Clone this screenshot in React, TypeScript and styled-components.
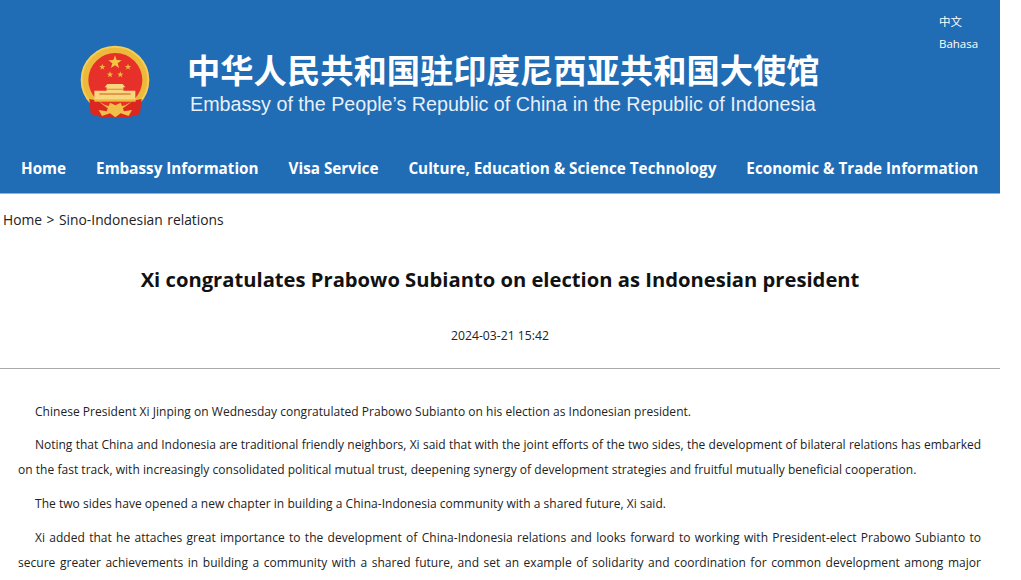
import styled, { createGlobalStyle, css } from "styled-components";

const FONT = `"Open Sans", "Noto Sans CJK SC", sans-serif`;

const navItems = [
  "Home",
  "Embassy Information",
  "Visa Service",
  "Culture, Education & Science Technology",
  "Economic & Trade Information",
];

const paragraphs = [
  { text: "Chinese President Xi Jinping on Wednesday congratulated Prabowo Subianto on his election as Indonesian president." },
  {
    text: "Noting that China and Indonesia are traditional friendly neighbors, Xi said that with the joint efforts of the two sides, the development of bilateral relations has embarked on the fast track, with increasingly consolidated political mutual trust, deepening synergy of development strategies and fruitful mutually beneficial cooperation.",
    tight: true,
  },
  { text: "The two sides have opened a new chapter in building a China-Indonesia community with a shared future, Xi said." },
  { text: "Xi added that he attaches great importance to the development of China-Indonesia relations and looks forward to working with President-elect Prabowo Subianto to secure greater achievements in building a community with a shared future, and set an example of solidarity and coordination for common development among major developing countries." },
];

const starPoints = (cx: number, cy: number, r: number) => {
  const pts: string[] = [];
  for (let i = 0; i < 10; i++) {
    const rad = i % 2 === 0 ? r : r * 0.4;
    const a = (Math.PI / 5) * i - Math.PI / 2;
    pts.push(`${(cx + rad * Math.cos(a)).toFixed(1)},${(cy + rad * Math.sin(a)).toFixed(1)}`);
  }
  return pts.join(" ");
};

function Emblem() {
  return (
    <svg width="70" height="76" viewBox="60 45 210 228">
      <circle cx="165" cy="150" r="100" fill="#edb93a" stroke="#f5cd58" strokeWidth="6" />
      <circle cx="166" cy="150" r="81" fill="#e8302a" />
      <polygon points={starPoints(165, 97, 21)} fill="#f3c544" />
      <polygon points={starPoints(127, 111, 10)} fill="#eeb83c" />
      <polygon points={starPoints(204, 111, 10)} fill="#eeb83c" />
      <polygon points={starPoints(150, 134, 10)} fill="#eeb83c" />
      <polygon points={starPoints(181, 134, 10)} fill="#eeb83c" />
      <path d="M134 172 L142 162 H188 L196 172 H190 V182 H226 V210 H103 V182 H140 V172 Z" fill="#f8d77e" />
      <path d="M118 190 H212 V194 H118 Z M140 176 H190 V179 H140 Z" fill="#d9853a" />
      <path d="M88 207 L114 212 Q150 244 166 244 Q182 244 218 212 L245 207 L240 252 L205 262 L125 262 L92 252 Z" fill="#dc2620" />
      <path d="M116 240 L140 244 L150 218 L166 226 L182 218 L192 244 L216 240 L206 258 L182 250 L166 262 L150 250 L126 258 Z" fill="#f0c048" />
      <rect x="103" y="208" width="124" height="7" fill="#edb93a" />
    </svg>
  );
}

export default function App() {
  return (
    <>
      <GlobalStyle />
      <Page>
        <Header>
          <Banner>
            <LogoSlot>
              <Emblem />
            </LogoSlot>
            <TitleBlock>
              <ChineseTitle>中华人民共和国驻印度尼西亚共和国大使馆</ChineseTitle>
              <EnglishTitle>Embassy of the People’s Republic of China in the Republic of Indonesia</EnglishTitle>
            </TitleBlock>
            <LangList>
              <LangLink>中文</LangLink>
              <LangLink>Bahasa</LangLink>
            </LangList>
          </Banner>
          <Nav>
            {navItems.map((item) => (
              <NavLink key={item}>{item}</NavLink>
            ))}
          </Nav>
        </Header>
        <Breadcrumb>Home &gt; Sino-Indonesian relations</Breadcrumb>
        <Title>Xi congratulates Prabowo Subianto on election as Indonesian president</Title>
        <DateLine>2024-03-21 15:42</DateLine>
        <Article>
          {paragraphs.map((p) => (
            <Paragraph key={p.text} $tight={p.tight}>
              {p.text}
            </Paragraph>
          ))}
        </Article>
      </Page>
    </>
  );
}

const GlobalStyle = createGlobalStyle`
  html, body {
    margin: 0;
    padding: 0;
    height: 580px;
    overflow: hidden;
    background: #fff;
  }
`;

const Page = styled.div`
  width: 1000px;
  font-family: ${FONT};
  color: #222;
`;

const Header = styled.header`
  background: #206cb5;
  border-bottom: 1px solid #8db6de;
  height: 194px;
  box-sizing: border-box;
`;

const Banner = styled.div`
  display: flex;
  height: 146px;
  padding-left: 80px;
  box-sizing: border-box;
`;

const LogoSlot = styled.div`
  width: 107px;
  padding-top: 45px;
  flex-shrink: 0;
`;

const TitleBlock = styled.div`
  padding-top: 45px;
  width: 752px;
  flex-shrink: 0;
`;

const ChineseTitle = styled.div`
  font-family: "Noto Sans CJK SC", sans-serif;
  font-size: 33.3px;
  line-height: 47px;
  font-weight: 700;
  color: #fff;
  white-space: nowrap;
`;

const EnglishTitle = styled.div`
  font-family: "Liberation Sans", Arial, sans-serif;
  font-size: 19.7px;
  line-height: 24px;
  margin-left: 3px;
  color: #e8f0f8;
  white-space: nowrap;
`;

const LangList = styled.div`
  display: flex;
  flex-direction: column;
  padding-top: 11px;
`;

const LangLink = styled.a`
  font-size: 11.5px;
  line-height: 22px;
  color: #fff;
`;

const Nav = styled.nav`
  display: flex;
  gap: 30px;
  padding: 0 21px;
  height: 43px;
  align-items: center;
`;

const NavLink = styled.a`
  font-size: 15.25px;
  font-weight: 700;
  color: #fff;
  white-space: nowrap;
`;

const Breadcrumb = styled.div`
  padding: 16px 0 0 3px;
  font-size: 13.8px;
  word-spacing: 1px;
  line-height: 20px;
  color: #222;
`;

const Title = styled.h1`
  margin: 34px 0 0;
  font-size: 20.2px;
  line-height: 30px;
  font-weight: 700;
  text-align: center;
  color: #111;
`;

const DateLine = styled.div`
  margin-top: 32px;
  padding-bottom: 22px;
  font-size: 12.2px;
  line-height: 20px;
  text-align: center;
  border-bottom: 1px solid #aaa;
`;

const Article = styled.article`
  padding: 29.8px 19px 0 18px;
`;

const Paragraph = styled.p<{ $tight?: boolean }>`
  margin: 0 0 8.6px;
  font-size: 12px;
  letter-spacing: 0.03px;
  line-height: 25px;
  text-indent: 17px;
  text-align: justify;
  color: #222;
  ${(p) =>
    p.$tight &&
    css`
      &::first-line {
        letter-spacing: -0.02px;
      }
    `}
`;
